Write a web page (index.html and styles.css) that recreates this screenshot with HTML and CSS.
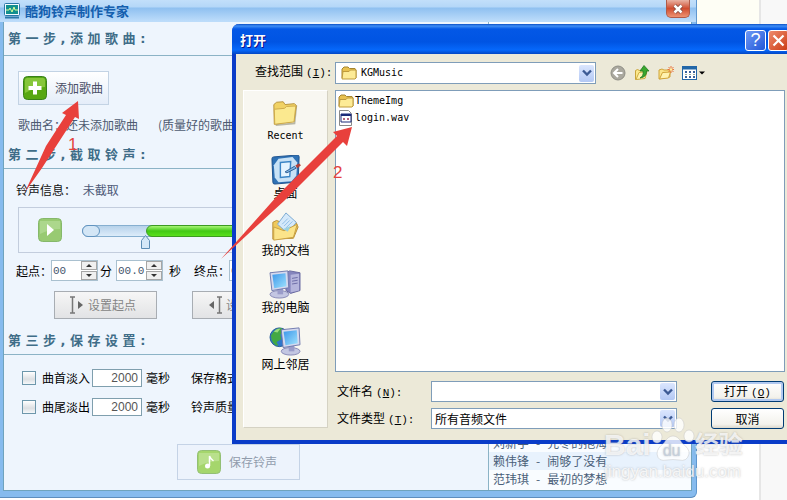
FILE: index.html
```html
<!DOCTYPE html>
<html lang="zh-CN">
<head>
  <meta charset="UTF-8" />
  <title>酷狗铃声制作专家</title>
  <link rel="stylesheet" href="styles.css">
</head>
<body>
  <div class="desktop">
    <div class="page-edge"></div>

    <div class="app">
      <div class="app-title">
        <svg class="app-icon" width="16" height="16" viewBox="0 0 16 16">
          <rect x="0.5" y="0.5" width="15" height="12" rx="1" fill="#f4fbff" stroke="#2b78a8" />
          <rect x="2" y="2" width="12" height="9" fill="#12908e" />
          <path d="M2 7h3l1-2 2 4 2-5 1 3h3" fill="none" stroke="#d9ff9a" />
          <path d="M1 14.5h14" stroke="#2b78a8" stroke-width="2" />
        </svg>
        <h1>酷狗铃声制作专家</h1>
        <button class="app-close" aria-label="关闭">
          <svg width="10" height="10" viewBox="0 0 10 10"><path d="M1.500 1.500l7 7M8.500 1.500l-7 7" stroke="#7c463e" stroke-width="4" /><path d="M1.500 1.500l7 7M8.500 1.500l-7 7" stroke="#fff" stroke-width="2.500" /></svg>
        </button>
      </div>

      <div class="app-body">
        <div class="steps">
          <h2>第 一 步 , 添 加 歌 曲 :</h2>
          <section class="step step-add">
            <button class="add-btn">
              <svg width="24" height="24" viewBox="0 0 24 24">
                <rect x="0.5" y="0.5" width="23" height="23" rx="4" fill="#57a712" stroke="#39811a" />
                <path d="M2 4q0-2 2-2h16q2 0 2 2v7q-10 0-20 6z" fill="#86c63a" />
                <path d="M12 5.500v13M5.500 12h13" stroke="#fff" stroke-width="4" />
              </svg>
              添加歌曲
            </button>
            <p class="song-name"><span>歌曲名：</span><span>还未添加歌曲</span><span class="hint">(质量好的歌曲做出来的铃声更好)</span></p>
          </section>

          <h2>第 二 步 , 截 取 铃 声 :</h2>
          <section class="step step-cut">
            <p class="ring-info">铃声信息： <span>未截取</span></p>
            <div class="player">
              <button class="play-btn" aria-label="播放">
                <svg width="24" height="24" viewBox="0 0 24 24">
                  <rect x="0.5" y="0.5" width="23" height="23" rx="4" fill="#98ca72" stroke="#85b86a" />
                  <path d="M2 3h20v8q-10 0-20 5z" fill="#acd78c" />
                  <path d="M9 6l7 6-7 6z" fill="#fff" />
                </svg>
              </button>
              <div class="track">
                <span class="track-cap"></span>
                <span class="track-fill"></span>
                <svg class="track-pin" width="9" height="14" viewBox="0 0 9 14"><path d="M.5 13.500v-8l4-5 4 5v8z" fill="#d4e7f7" stroke="#5c8cb4" /></svg>
              </div>
            </div>
            <div class="times">
              <label for="startMin">起点：</label>
              <span class="spin"><input type="text" id="startMin" value="00" /><span class="spin-btns"><button class="up" aria-label="加"></button><button class="down" aria-label="减"></button></span></span>
              <label for="startSec">分</label>
              <span class="spin"><input type="text" id="startSec" value="00.0" /><span class="spin-btns"><button class="up" aria-label="加"></button><button class="down" aria-label="减"></button></span></span>
              <span class="unit">秒</span>
              <label for="endMin">终点：</label>
              <span class="spin"><input type="text" id="endMin" value="00" /></span>
            </div>
            <div class="marks">
              <button class="mark-btn">
                <svg width="14" height="18" viewBox="0 0 14 18"><path d="M0 1h5M0 17h5M2.500 1v16" stroke="#777" stroke-width="1.500" /><path d="M8 5l5 4-5 4z" fill="#666" /></svg>
                设置起点
              </button>
              <button class="mark-btn">
                <svg width="14" height="18" viewBox="0 0 14 18"><path d="M9 1h5M9 17h5M11.500 1v16" stroke="#777" stroke-width="1.500" /><path d="M6 5l-5 4 5 4z" fill="#666" /></svg>
                设置终点
              </button>
            </div>
          </section>

          <h2>第 三 步 , 保 存 设 置 :</h2>
          <section class="step step-save">
            <div class="fade-row">
              <label><input type="checkbox" />曲首淡入</label>
              <input type="text" class="ms" value="2000" aria-label="曲首淡入毫秒" />
              <span>毫秒</span>
              <span class="opt">保存格式：</span>
            </div>
            <div class="fade-row">
              <label><input type="checkbox" />曲尾淡出</label>
              <input type="text" class="ms" value="2000" aria-label="曲尾淡出毫秒" />
              <span>毫秒</span>
              <span class="opt">铃声质量：</span>
            </div>
            <button class="save-btn" disabled>
              <svg width="24" height="24" viewBox="0 0 24 24">
                <rect x="0.5" y="0.5" width="23" height="23" rx="4" fill="#a5d66c" stroke="#93bf75" />
                <path d="M2 3h20v8q-10 0-20 5z" fill="#b9e08c" />
                <circle cx="10.500" cy="16" r="2.500" fill="#fff" />
                <path d="M12.500 16V6q1 3 4 5" fill="none" stroke="#fff" stroke-width="1.500" />
              </svg>
              保存铃声
            </button>
          </section>
        </div>

        <ul class="songs">
          <li><span>刘新宇</span><span>-</span><span>先冬的抱海</span></li>
          <li><span>赖伟锋</span><span>-</span><span>闹够了没有</span></li>
          <li><span>范玮琪</span><span>-</span><span>最初的梦想</span></li>
        </ul>
      </div>
    </div>

    <div class="dialog" role="dialog" aria-label="打开">
      <div class="dialog-title">
        <h2>打开</h2>
        <button class="title-btn" aria-label="帮助">?</button>
        <button class="title-btn title-close" aria-label="关闭">
          <svg width="13" height="13" viewBox="0 0 13 13"><path d="M1.500 1.500l10 10M11.500 1.500l-10 10" stroke="#fff" stroke-width="2.200" /></svg>
        </button>
      </div>

      <div class="dialog-body">
        <div class="look-label">查找范围<span class="key">(<u>I</u>):</span></div>
        <div class="look-in">
          <button class="combo look-combo">
            <svg width="16" height="14" viewBox="0 0 16 14"><use href="#folder" /></svg>
            <span class="mono">KGMusic</span>
            <span class="arrow"><svg width="10" height="8" viewBox="0 0 10 8"><path d="M1 1.500l4 4 4-4" fill="none" stroke="#3c5a94" stroke-width="2.400" /></svg></span>
          </button>
          <div class="tools">
            <button aria-label="后退"><svg width="16" height="16" viewBox="0 0 16 16"><circle cx="8" cy="8" r="7" fill="#aaa89e" stroke="#8f8e86" /><path d="M12.500 8H4.500M8 4L4 8l4 4" fill="none" stroke="#fff" stroke-width="2" /></svg></button>
            <button aria-label="向上一级"><svg width="16" height="16" viewBox="0 0 16 16"><path d="M1.500 14.500v-9l2-1 2 1 6-1v8z" fill="#fbe88c" stroke="#c9a53c" /><path d="M2 14.500l3-7 8-1-2 7z" fill="#fff3ae" stroke="#d0ae44" /><path d="M6 13q4-2 3-7H6L10 .5l5 5.500h-2.500Q13 12 6 13z" fill="#3aa72e" stroke="#1f7a22" stroke-width=".8" /></svg></button>
            <button aria-label="新建文件夹"><svg width="16" height="16" viewBox="0 0 16 16"><path d="M1 14V5l3-1 2 1h6v7z" fill="#fbe48a" stroke="#d0a43a" /><path d="M1.500 14l3-6.500 8-.5-2 6z" fill="#fff2b0" stroke="#d0a43a" /><path d="M13 1v7M9.500 4.500h7M10.500 2l5 5M15.500 2l-5 5" stroke="#e8733c" /><circle cx="13" cy="4.500" r="1.300" fill="#fff1a0" /></svg></button>
            <button aria-label="查看"><svg width="23" height="16" viewBox="0 0 23 16"><rect x=".5" y="1.500" width="14" height="13" fill="#fff" stroke="#2267a8" /><path d="M0 3h15" stroke="#2267a8" stroke-width="3" /><path d="M3 7h2M7 7h2M11 7h2M3 12h2M7 12h2M11 12h2" stroke="#39619a" stroke-width="2" /><path d="M3 9.500h2M7 9.500h2M11 9.500h2" stroke="#9a9" /><path d="M17 6.500h6l-3 3z" fill="#000" /></svg></button>
          </div>
        </div>

        <nav class="places">
          <a href="#recent">
            <svg width="32" height="32" viewBox="0 0 32 32">
              <path d="M5 29l20-2 2-19" fill="none" stroke="#b9b7a6" stroke-width="2" />
              <path d="M3.500 28L3 7l3-2.500 7-.5 2 3 10-1 2 2-2.500 17z" fill="#f1d264" stroke="#b5913a" />
              <path d="M4 28L3.500 12l11-1 2-2 10-.5-2 17z" fill="#fbe98f" stroke="#cda947" />
            </svg>
            <span class="mono">Recent</span>
          </a>
          <a href="#desktop">
            <svg width="32" height="32" viewBox="0 0 32 32">
              <path d="M1 4q0-2 2-2l25-2q2 0 2 2l-1 25q0 2-2 2l-23 2q-2 0-2-2z" fill="#2f72b5" stroke="#1a4f8c" />
              <path d="M8 4l15-2 5 6-1 14-5 6-14 1-4-5-1-13z" fill="#c8e2f6" />
              <path d="M10 8l11-1-1 16-10 1z" fill="#e4f4ff" stroke="#3a85c6" stroke-width="1.500" />
              <path d="M15 18l10-6 2 2-10 5z" fill="#7fb6e2" stroke="#2c5d94" />
              <path d="M26 11l4-2 2 2-4 3z" fill="#b04038" />
            </svg>
            桌面
          </a>
          <a href="#documents">
            <svg width="32" height="32" viewBox="0 0 32 32">
              <path d="M3 29V11l4-2 5 2 15-1 3 6-5 12z" fill="#efc95c" stroke="#b58c35" />
              <path d="M8 13l9-12 11 10-9 12z" fill="#d5e9fa" stroke="#77a7d0" />
              <path d="M13 13l6-6M15 15l6-6M17 17l7-7" stroke="#8bbbe5" />
              <path d="M4 30V16l11 4 14-7-4 14z" fill="#fbe48a" stroke="#c9a040" />
              <path d="M14 18l8-3-3 6z" fill="#9bd1df" />
            </svg>
            我的文档
          </a>
          <a href="#computer">
            <svg width="34" height="32" viewBox="0 0 34 32">
              <path d="M18 4l4-2 11 2v19l-10 3-5-3z" fill="#8585bd" stroke="#65659d" />
              <path d="M23 6l9-1v18l-9 2z" fill="#b5b5dc" />
              <path d="M24.500 10l6-1M24.500 13l6-1M24.500 16l6-1" stroke="#6b6ba5" />
              <use href="#monitor" />
            </svg>
            我的电脑
          </a>
          <a href="#network">
            <svg width="34" height="32" viewBox="0 0 34 32">
              <circle cx="11" cy="12" r="10" fill="#2e77cb" stroke="#245a93" />
              <path d="M2 10q4-8 11-8l4 4-5 3 1 5-5 3 2 4Q3 21 2 10z" fill="#43a844" />
              <path d="M5 6q3-4 7-3l-3 4z" fill="#9bdc7d" />
              <use href="#monitor" x="12" y="0" />
            </svg>
            网上邻居
          </a>
        </nav>

        <ul class="files">
          <li><svg width="16" height="14" viewBox="0 0 16 14"><use href="#folder" /></svg><span class="mono">ThemeImg</span></li>
          <li>
            <svg width="16" height="16" viewBox="0 0 16 16"><path d="M1.500.5h9l3 3v12h-12z" fill="#fff" stroke="#888" /><path d="M3 4h10v8H3z" fill="#fff" stroke="#1b2b78" /><path d="M3 5h10" stroke="#1b2b78" stroke-width="2" /><path d="M5 9h2M6 8v2M9 9h2M10 8v2" stroke="#9a3050" /></svg>
            <span class="mono">login.wav</span>
          </li>
        </ul>

        <form class="fields">
          <label for="fileName">文件名<span class="key">(<u>N</u>):</span></label>
          <div class="combo">
            <input type="text" id="fileName" />
            <span class="arrow"><svg width="10" height="8" viewBox="0 0 10 8"><path d="M1 1.500l4 4 4-4" fill="none" stroke="#3c5a94" stroke-width="2.400" /></svg></span>
          </div>
          <button type="button" class="xp-btn default">打开<span class="key">(<u>O</u>)</span></button>

          <label for="fileType">文件类型<span class="key">(<u>T</u>):</span></label>
          <div class="combo">
            <select id="fileType"><option>所有音频文件</option></select>
            <span class="arrow"><svg width="10" height="8" viewBox="0 0 10 8"><path d="M1 1.500l4 4 4-4" fill="none" stroke="#3c5a94" stroke-width="2.400" /></svg></span>
          </div>
          <button type="button" class="xp-btn">取消</button>
        </form>
      </div>
    </div>

    <!-- step arrows -->
    <svg class="pointer pointer-one" width="56" height="94" viewBox="0 0 56 94">
      <path d="M1 92L22 46 42 15l-4-2L54 1l1 18-4-2-33 51z" fill="#e8403c" />
    </svg>
    <span class="step-no no-one">1</span>
    <svg class="pointer pointer-two" width="132" height="134" viewBox="0 0 132 134">
      <path d="M0 133L57 69 116 10l-4-4 19-5-5 19-4-4-59 59z" fill="#e8403c" />
    </svg>
    <span class="step-no no-two">2</span>

    <div class="watermark">
      <div class="brand">
        <b>Bai</b>
        <span class="paw">
          <svg width="44" height="46" viewBox="0 0 44 46">
            <g fill="#fff" fill-opacity=".8" stroke="#bbb" stroke-opacity=".4">
              <ellipse cx="6" cy="21" rx="5" ry="6" />
              <ellipse cx="16" cy="9" rx="5" ry="7" />
              <ellipse cx="28" cy="9" rx="5" ry="7" />
              <ellipse cx="38" cy="20" rx="5" ry="6" />
              <path d="M22 20q5 0 9 7 8 6 7 11-2 8-10 6-6-1-12 0-9 2-10-6 0-6 7-11 4-7 9-7z" />
            </g>
          </svg>
          <i>du</i>
        </span>
        <b class="cn">经验</b>
      </div>
      <div class="site">jingyan.baidu.com</div>
    </div>
  </div>

  <svg class="defs" width="0" height="0">
    <defs>
      <linearGradient id="screen" x1="0" y1="0" x2="1" y2="1">
        <stop offset="0" stop-color="#3c97ea" />
        <stop offset="1" stop-color="#9fe2fd" />
      </linearGradient>
      <g id="folder">
        <path d="M1 12V3l2-2h4l1.500 1.500H14l1 1.500v8z" fill="#e8c14f" stroke="#a48530" />
        <path d="M1 13l1-7.500h6L9.500 4H15v8l-1 1z" fill="#fdeb96" stroke="#bf9b3c" />
      </g>
      <g id="monitor">
        <ellipse cx="11" cy="27" rx="10" ry="4" fill="#c3c6e2" stroke="#8587b5" />
        <path d="M9 20h6v7H9z" fill="#9a9cc9" />
        <path d="M1 4l19-2 1 18-18 3z" fill="#d5d9ee" stroke="#6d78ad" />
        <path d="M3.500 6l14-1.500 1 14-13 2z" fill="url(#screen)" />
      </g>
    </defs>
  </svg>
</body>
</html>
```
FILE: styles.css
```css
html, body {
  margin: 0;
  padding: 0;
  height: 100%;
}

body, button, input, select {
  font-family: "Noto Sans CJK SC", sans-serif;
  font-size: 12px;
  line-height: 16px;
}

h1, h2, p, ul {
  margin: 0;
  padding: 0;
}

ul {
  list-style: none;
}

button, input, select {
  box-sizing: border-box;
  margin: 0;
  padding: 0;
}

svg {
  display: block;
  flex: none;
}

.defs {
  position: absolute;
}

.mono {
  font-family: "DejaVu Sans Mono", monospace;
  font-size: 10px;
}

.key {
  font-family: "Liberation Mono", monospace;
  font-size: 11px;
  margin-left: 3px;
}

.desktop {
  position: relative;
  height: 100%;
  overflow: hidden;
  background: linear-gradient(#fefef5 0, #fefef5 200px, #fff 200px);
}

.page-edge {
  position: absolute;
  top: 0;
  right: 0;
  bottom: 0;
  width: 26px;
  background: #f8f8f8;
  border-left: 2px solid #e6e6e6;
}

/* ringtone maker window */
.app {
  position: absolute;
  top: 0;
  left: 0;
  right: 90px;
  bottom: 2px;
  box-sizing: border-box;
  display: flex;
  flex-direction: column;
  padding: 0 4px 6px 3px;
  background: #86bbee;
  border-right: 1px solid #5f97cf;
  border-bottom: 1px solid #5d8dbd;
  border-radius: 0 0 6px 0;
}

.app-title {
  display: flex;
  align-items: center;
  height: 22px;
  margin: 0 -4px 0 -3px;
  padding: 0 6px 0 4px;
  background: linear-gradient(#c2dffa 0, #b4d7f8 7px, #8fc0f0 8px, #bcdcfa 21px);
}

.app-title h1 {
  flex: 1;
  margin-left: 5px;
  font-size: 13px;
  line-height: 20px;
  color: #145fae;
}

.app-close {
  display: flex;
  align-items: center;
  justify-content: center;
  align-self: flex-start;
  width: 24px;
  height: 18px;
  border: 1px solid #b05a48;
  border-top: none;
  border-radius: 0 0 5px 5px;
  background: linear-gradient(#e9b3a4, #cf4c30 50%, #ee9272);
}

.app-body {
  flex: 1;
  display: flex;
  border: 1px solid #6fa3bd;
  border-top: none;
  background: #eef5fd;
}

.steps {
  flex: 1;
  min-width: 0;
  overflow: hidden;
}

.steps h2 {
  height: 33px;
  padding-left: 4px;
  border-bottom: 1px solid #8bb3c6;
  font-family: "DejaVu Sans", "Noto Sans CJK SC", sans-serif;
  font-size: 13px;
  line-height: 33px;
  white-space: nowrap;
  color: #3f6d88;
}

.steps .step + h2 {
  height: 27px;
  line-height: 27px;
}

.step {
  display: flow-root;
  padding-left: 14px;
}

.step-add {
  height: 85px;
  color: #4d5a70;
}

.add-btn {
  display: flex;
  align-items: center;
  gap: 8px;
  width: 91px;
  height: 34px;
  margin-top: 15px;
  padding-left: 4px;
  border: 1px solid #c3d3e4;
  background: linear-gradient(#fff, #e4edf9);
  color: #4a4f66;
  white-space: nowrap;
}

.song-name {
  display: flex;
  margin-top: 12px;
  white-space: nowrap;
}

.hint {
  margin-left: 20px;
}

.step-cut {
  height: 158px;
}

.ring-info {
  margin: 13px 0 9px -2px;
  color: #111;
}

.ring-info span {
  margin-left: 4px;
  color: #4d5a78;
}

.player {
  display: flex;
  align-items: center;
  box-sizing: border-box;
  height: 46px;
  margin-right: 12px;
  padding-left: 19px;
  border: 1px solid #c3cddd;
}

.play-btn {
  border: none;
  background: none;
}

.track {
  position: relative;
  display: flex;
  flex: 1;
  box-sizing: border-box;
  height: 12px;
  margin: 2px 20px 0 20px;
  border: 1px solid #86afd0;
  border-radius: 6px;
  background: linear-gradient(#b7d2ea, #dcecfa);
}

.track-cap {
  width: 16px;
  margin: -1px 0 -1px -1px;
  border: 1px solid #6294c0;
  border-radius: 6px;
  background: #d3e6f6;
}

.track-fill {
  flex: 1;
  margin: -1px -1px -1px 46px;
  border: 1px solid #3c9a22;
  border-radius: 6px;
  background: linear-gradient(#a8f576, #42c916 50%, #5ae01d);
}

.track-pin {
  position: absolute;
  left: 58px;
  top: 9px;
}

.times {
  display: flex;
  align-items: center;
  height: 21px;
  margin: 7px 0 0 -2px;
  color: #000;
  white-space: nowrap;
}

.times label[for="startMin"], .times label[for="endMin"] {
  width: 35px;
}

.times label[for="startSec"] {
  margin: 0 4px 0 2px;
}

.spin {
  display: flex;
  align-items: center;
  box-sizing: border-box;
  width: 47px;
  height: 21px;
  border: 1px solid #a9c0cf;
  background: #fff;
}

.spin input {
  width: 29px;
  height: 17px;
  padding-left: 1px;
  border: none;
  background: none;
  font-family: "Liberation Mono", monospace;
  font-size: 11px;
  color: #44546c;
}

.spin-btns {
  display: flex;
  flex-direction: column;
  gap: 1px;
}

.spin-btns button {
  display: flex;
  align-items: center;
  justify-content: center;
  width: 16px;
  height: 9px;
  border: 1px solid #a6a6a6;
  background: #f0f0f0;
}

.spin-btns button::before {
  content: "";
  border: 3px solid transparent;
}

.spin-btns .up::before {
  border-top: none;
  border-bottom-color: #333;
}

.spin-btns .down::before {
  border-bottom: none;
  border-top-color: #333;
}

.unit {
  margin: 0 13px 0 6px;
}

.marks {
  display: flex;
  gap: 35px;
  margin: 10px 0 0 36px;
}

.mark-btn {
  display: flex;
  align-items: center;
  flex: none;
  gap: 4px;
  width: 103px;
  height: 28px;
  padding-left: 15px;
  border: 1px solid #a8adb3;
  background: linear-gradient(#f6f6f6, #e2e3e5);
  color: #858585;
}

.fade-row {
  display: flex;
  align-items: center;
  height: 20px;
  margin: 13px 0 0 4px;
  color: #000;
  white-space: nowrap;
}

.fade-row + .fade-row {
  margin-top: 9px;
}

.fade-row label {
  display: flex;
  align-items: center;
  gap: 6px;
}

.fade-row input[type="checkbox"] {
  appearance: none;
  width: 14px;
  height: 14px;
  border: 1px solid #6d97ab;
  background: linear-gradient(#fff, #dcdfe2 60%, #f5f8fa);
}

.ms {
  width: 50px;
  height: 18px;
  margin: 0 4px 0 2px;
  padding-right: 3px;
  border: 1px solid #7f9fae;
  background: #fff;
  font-family: "Liberation Sans", sans-serif;
  text-align: right;
  color: #555;
}

.opt {
  margin-left: 21px;
}

.save-btn {
  display: flex;
  align-items: center;
  gap: 8px;
  width: 123px;
  height: 36px;
  margin: 27px 0 0 159px;
  padding-left: 19px;
  border: 1px solid #c5d3e6;
  background: #edf3fc;
  color: #919cac;
}

.songs {
  display: flex;
  flex-direction: column;
  justify-content: flex-end;
  width: 202px;
  border-left: 1px solid #8bb3c6;
  background: #f9fcff;
}

.songs li {
  display: flex;
  gap: 7px;
  height: 18px;
  padding-left: 4px;
  line-height: 18px;
  color: #4a6079;
}

.songs li:nth-child(even) {
  background: #e8f2fd;
}

.songs li:last-child {
  height: 20px;
}

/* XP open dialog */
.dialog {
  position: absolute;
  top: 24px;
  left: 232px;
  right: -5px;
  box-sizing: border-box;
  border: 4px solid #0a3cc8;
  border-top: none;
  border-radius: 7px 7px 0 0;
  background: #ece9d8;
}

.dialog-title {
  display: flex;
  align-items: center;
  gap: 2px;
  height: 30px;
  margin: 0 -4px;
  padding: 2px 3px 0 8px;
  box-sizing: border-box;
  border-radius: 7px 7px 0 0;
  background: linear-gradient(#0a4fc4 0, #3f8ef5 2px, #0458e6 5px, #0054e3 18px, #0668fb 26px, #0347c4);
}

.dialog-title h2 {
  flex: 1;
  font-size: 13px;
  line-height: 20px;
  color: #fff;
  text-shadow: 1px 1px #0f1089;
}

.title-btn {
  display: flex;
  align-items: center;
  justify-content: center;
  width: 21px;
  height: 21px;
  border: 1px solid #fff;
  border-radius: 3px;
  background: linear-gradient(135deg, #6e99f5, #2257d8);
  font-family: "Liberation Sans", sans-serif;
  font-size: 18px;
  color: #fff;
}

.title-close {
  background: linear-gradient(135deg, #ee8d6f, #cb3a13);
}

.dialog-body {
  display: grid;
  grid-template-columns: 85px 1fr;
  grid-template-rows: 22px 288px auto;
  column-gap: 7px;
  padding: 8px 3px 11px 7px;
  color: #000;
}

.look-label {
  padding-left: 12px;
  line-height: 18px;
  white-space: nowrap;
}

.look-in {
  display: flex;
  gap: 14px;
}

.combo {
  display: flex;
  align-items: center;
  box-sizing: border-box;
  height: 21px;
  padding: 1px;
  border: 1px solid #7f9db9;
  background: #fff;
}

.look-combo {
  width: 261px;
  height: 22px;
  gap: 4px;
  padding-left: 5px;
}

.combo .arrow {
  display: flex;
  align-items: center;
  justify-content: center;
  width: 15px;
  height: 17px;
  margin-left: auto;
  border-radius: 2px;
  background: linear-gradient(#dbe6fe, #b3c8f4);
}

.combo input, .combo select {
  flex: 1;
  min-width: 0;
  padding-left: 2px;
  appearance: none;
  border: none;
  background: none;
  color: #000;
}

.tools {
  display: flex;
  align-items: center;
  gap: 8px;
}

.tools button {
  border: none;
  background: none;
}

.places {
  grid-row: 2 / 4;
  display: flex;
  flex-direction: column;
  align-items: center;
  box-sizing: border-box;
  height: 338px;
  margin-top: 6px;
  padding-top: 7px;
  border: 1px solid #fff;
  border-right-color: #d5d2c3;
  border-bottom-color: #d5d2c3;
  background: #f8f7f1;
}

.places a {
  display: flex;
  flex-direction: column;
  align-items: center;
  height: 57px;
  color: #000;
  text-decoration: none;
}

.places svg {
  height: 30px;
}

.files {
  margin-top: 6px;
  padding: 1px 0 0 2px;
  border: 1px solid #7f9db9;
  background: #fff;
}

.files li {
  display: flex;
  align-items: center;
  gap: 1px;
  height: 17px;
}

.fields {
  display: grid;
  grid-template-columns: 88px minmax(0, 246px) 1fr;
  column-gap: 6px;
  row-gap: 6px;
  align-items: center;
  padding: 9px 1px 0 2px;
}

.xp-btn {
  justify-self: end;
  width: 73px;
  height: 21px;
  border: 1px solid #003c74;
  border-radius: 3px;
  background: linear-gradient(#fff, #f3f2ec 80%, #dcd8cc);
  color: #000;
}

.xp-btn.default {
  box-shadow: inset 0 0 0 2px #b1c9f0;
}

.pointer, .step-no {
  position: absolute;
}

.pointer-one {
  left: 24px;
  top: 100px;
}

.pointer-two {
  left: 221px;
  top: 126px;
}

.step-no {
  font-family: "Liberation Sans", sans-serif;
  font-size: 17px;
  line-height: 18px;
  color: #e4433f;
}

.no-one {
  left: 68px;
  top: 136px;
}

.no-two {
  left: 333px;
  top: 164px;
}

.watermark {
  position: absolute;
  right: 40px;
  bottom: 18px;
  width: 143px;
  font-family: "Liberation Sans", "Noto Sans CJK SC", sans-serif;
  color: rgba(255, 255, 255, 0.8);
  text-shadow: 0 0 2px rgba(120, 120, 120, 0.5);
}

.brand {
  display: flex;
  align-items: flex-end;
  height: 48px;
}

.brand b {
  font-size: 30px;
  line-height: 34px;
}

.brand .cn {
  font-size: 24px;
}

.paw {
  position: relative;
}

.paw i {
  position: absolute;
  left: 12px;
  bottom: 3px;
  font-size: 16px;
  font-style: normal;
  color: #c5cfdc;
}

.site {
  font-size: 17px;
  line-height: 20px;
}
```
